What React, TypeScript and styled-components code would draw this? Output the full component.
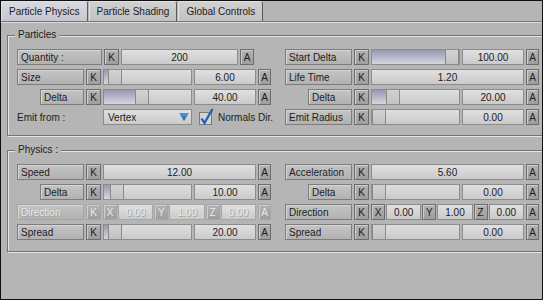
import React from "react";
import styled, { createGlobalStyle } from "styled-components";

const GlobalStyle = createGlobalStyle`
  html, body { margin: 0; padding: 0; background: #b5b5b5; }
  body {
    font-family: "Liberation Sans", Arial, sans-serif;
    font-size: 10px;
    color: #1c1c1c;
  }
`;

const Window = styled.div`
  width: 543px;
  height: 300px;
  box-sizing: border-box;
  border: 1px solid #101010;
  background: #b5b5b5;
  overflow: hidden;
  display: flex;
  flex-direction: column;
`;

const TabBar = styled.div`
  display: flex;
  height: 20px;
  flex: none;
  border-bottom: 1px solid #767676;
  box-shadow: 0 1px 0 #dcdcdc;
`;

const Tab = styled.div<{ $active?: boolean }>`
  display: flex;
  align-items: center;
  padding: 0 7px;
  margin-right: 1px;
  border-top: 1px solid #e2e2e2;
  border-left: 1px solid #e2e2e2;
  border-right: 1px solid #5a5a5a;
  border-radius: 2px 3px 0 0;
  background: ${(p) =>
    p.$active ? "linear-gradient(#d8d8e0, #c6c6ce)" : "linear-gradient(#d0d0d0, #c2c2c2)"};
`;

const Panel = styled.div`
  padding: 13px 0 0 6px;
`;

const Group = styled.div`
  position: relative;
  margin-right: -30px;
  border: 1px solid #747474;
  box-shadow: inset 1px 1px 0 #e4e4e4, 1px 1px 0 #e4e4e4;
  padding: 13px 0 10px 9px;

  & + & {
    margin-top: 14px;
    padding-bottom: 11px;
  }
`;

const Legend = styled.span`
  position: absolute;
  top: -7px;
  left: 7px;
  padding: 0 3px;
  line-height: 12px;
  background: #b5b5b5;
`;

const Grid = styled.div`
  display: grid;
  grid-template-columns: 254px 254px;
  grid-auto-rows: 16px;
  column-gap: 14px;
  row-gap: 4px;
`;

const Row = styled.div<{ $indent?: boolean; $disabled?: boolean }>`
  display: flex;
  gap: 2px;
  padding-left: ${(p) => (p.$indent ? 23 : 0)}px;

  ${(p) =>
    p.$disabled &&
    `
    color: #e8e8e8;
    text-shadow: 1px 1px 0 #a2a2a2;
    & * { border-color: #a6a6a6 !important; }
  `}
`;

const Box = styled.div`
  flex: none;
  box-sizing: border-box;
  height: 16px;
  display: flex;
  align-items: center;
  white-space: nowrap;
`;

const Label = styled(Box)<{ $w: number }>`
  width: ${(p) => p.$w}px;
  padding-left: 3px;
  border: 1px solid #7c7c7c;
  background: linear-gradient(#c4c4c4, #b2b2b2);
  box-shadow: inset 1px 1px 0 #d6d6d6;
`;

const Btn = styled(Box)<{ $w?: number }>`
  width: ${(p) => p.$w ?? 15}px;
  justify-content: center;
  border: 1px solid #6c6c6c;
  background: linear-gradient(#b2b2b2, #9e9e9e);
  box-shadow: inset 1px 1px 0 #cecece;
`;

const Field = styled(Box)<{ $w?: number }>`
  width: ${(p) => (p.$w ? `${p.$w}px` : "auto")};
  flex: ${(p) => (p.$w ? "none" : "1")};
  justify-content: center;
  border: 1px solid #8c8c8c;
  background: linear-gradient(#e0e0e0, #cacaca);
`;

const Track = styled(Box)`
  width: 89px;
  border: 1px solid #8c8c8c;
  background: linear-gradient(#dedede, #cacaca);
  align-items: stretch;
`;

const Fill = styled.div`
  flex: none;
  background: linear-gradient(#9898b2, #d6d6e0);
`;

const Thumb = styled.div`
  flex: none;
  width: 14px;
  box-sizing: border-box;
  border: 1px solid #8a8a8a;
  border-top: none;
  border-bottom: none;
  background: linear-gradient(#d2d2d2, #c2c2c2);
`;

const Triple = styled(Box)`
  width: 153px;
  gap: 1px;
`;

const PlainText = styled(Box)<{ $w?: number }>`
  width: ${(p) => (p.$w ? `${p.$w}px` : "auto")};
`;

const Select = styled(Box)`
  width: 89px;
  justify-content: space-between;
  padding: 0 2px 0 4px;
  border: 1px solid #8c8c8c;
  background: linear-gradient(#e0e0e0, #cacaca);
`;

const Check = styled.svg`
  flex: none;
  overflow: visible;
  margin: 0 4px 0 5px;
`;

type Param =
  | { kind: "slider"; label: string; value: string; pos: number; indent?: boolean }
  | { kind: "wide"; label: string; value: string }
  | { kind: "xyz"; label: string; xyz: [string, string, string]; disabled?: boolean }
  | { kind: "quantity"; label: string; value: string }
  | { kind: "emit" };

const TRAVEL = 73;

function ParamRow({ p }: { p: Param }) {
  if (p.kind === "emit") {
    return (
      <Row>
        <PlainText $w={84}>Emit from :</PlainText>
        <Select>
          <span>Vertex</span>
          <svg width="10" height="8" viewBox="0 0 10 8">
            <defs>
              <linearGradient id="arr" x1="0" y1="0" x2="0" y2="1">
                <stop offset="0" stopColor="#4a9ee0" />
                <stop offset="1" stopColor="#1460a8" />
              </linearGradient>
            </defs>
            <polygon points="0,0 10,0 5,8" fill="url(#arr)" />
          </svg>
        </Select>
        <Check width="13" height="16" viewBox="0 0 13 16">
          <rect x="0.5" y="3.5" width="12" height="12" fill="#d4d4d4" stroke="#7a7a7a" />
          <path d="M2.5 9.5 L5.5 14 L13.5 0" stroke="#1d5eb2" strokeWidth="2.2" fill="none" />
        </Check>
        <PlainText>Normals Dir.</PlainText>
      </Row>
    );
  }
  if (p.kind === "quantity") {
    return (
      <Row>
        <Label $w={85}>{p.label}</Label>
        <Btn>K</Btn>
        <Field $w={117}>{p.value}</Field>
        <Btn $w={14}>A</Btn>
      </Row>
    );
  }
  const indent = p.kind === "slider" && !!p.indent;
  const disabled = p.kind === "xyz" && !!p.disabled;
  return (
    <Row $indent={indent} $disabled={disabled}>
      <Label $w={indent ? 44 : 67}>{p.label}</Label>
      <Btn>K</Btn>
      {p.kind === "slider" && (
        <>
          <Track>
            <Fill style={{ width: Math.round(p.pos * TRAVEL) }} />
            <Thumb />
          </Track>
          <Field $w={62}>{p.value}</Field>
        </>
      )}
      {p.kind === "wide" && <Field $w={153}>{p.value}</Field>}
      {p.kind === "xyz" && (
        <Triple>
          {(["X", "Y", "Z"] as const).map((axis, i) => (
            <React.Fragment key={axis}>
              <Btn $w={14}>{axis}</Btn>
              <Field>{p.xyz[i]}</Field>
            </React.Fragment>
          ))}
        </Triple>
      )}
      <Btn $w={13}>A</Btn>
    </Row>
  );
}

const particles: Param[] = [
  { kind: "quantity", label: "Quantity :", value: "200" },
  { kind: "slider", label: "Start Delta", value: "100.00", pos: 1 },
  { kind: "slider", label: "Size", value: "6.00", pos: 0.055 },
  { kind: "wide", label: "Life Time", value: "1.20" },
  { kind: "slider", label: "Delta", value: "40.00", pos: 0.42, indent: true },
  { kind: "slider", label: "Delta", value: "20.00", pos: 0.19, indent: true },
  { kind: "emit" },
  { kind: "slider", label: "Emit Radius", value: "0.00", pos: 0 },
];

const physics: Param[] = [
  { kind: "wide", label: "Speed", value: "12.00" },
  { kind: "wide", label: "Acceleration", value: "5.60" },
  { kind: "slider", label: "Delta", value: "10.00", pos: 0.08, indent: true },
  { kind: "slider", label: "Delta", value: "0.00", pos: 0, indent: true },
  { kind: "xyz", label: "Direction", xyz: ["0.00", "1.00", "0.00"], disabled: true },
  { kind: "xyz", label: "Direction", xyz: ["0.00", "1.00", "0.00"] },
  { kind: "slider", label: "Spread", value: "20.00", pos: 0.055 },
  { kind: "slider", label: "Spread", value: "0.00", pos: 0 },
];

export default function App() {
  return (
    <>
      <GlobalStyle />
      <Window>
        <TabBar>
          <Tab $active>Particle Physics</Tab>
          <Tab>Particle Shading</Tab>
          <Tab>Global Controls</Tab>
        </TabBar>
        <Panel>
          <Group>
            <Legend>Particles</Legend>
            <Grid>
              {particles.map((p, i) => (
                <ParamRow key={i} p={p} />
              ))}
            </Grid>
          </Group>
          <Group>
            <Legend>Physics :</Legend>
            <Grid>
              {physics.map((p, i) => (
                <ParamRow key={i} p={p} />
              ))}
            </Grid>
          </Group>
        </Panel>
      </Window>
    </>
  );
}
